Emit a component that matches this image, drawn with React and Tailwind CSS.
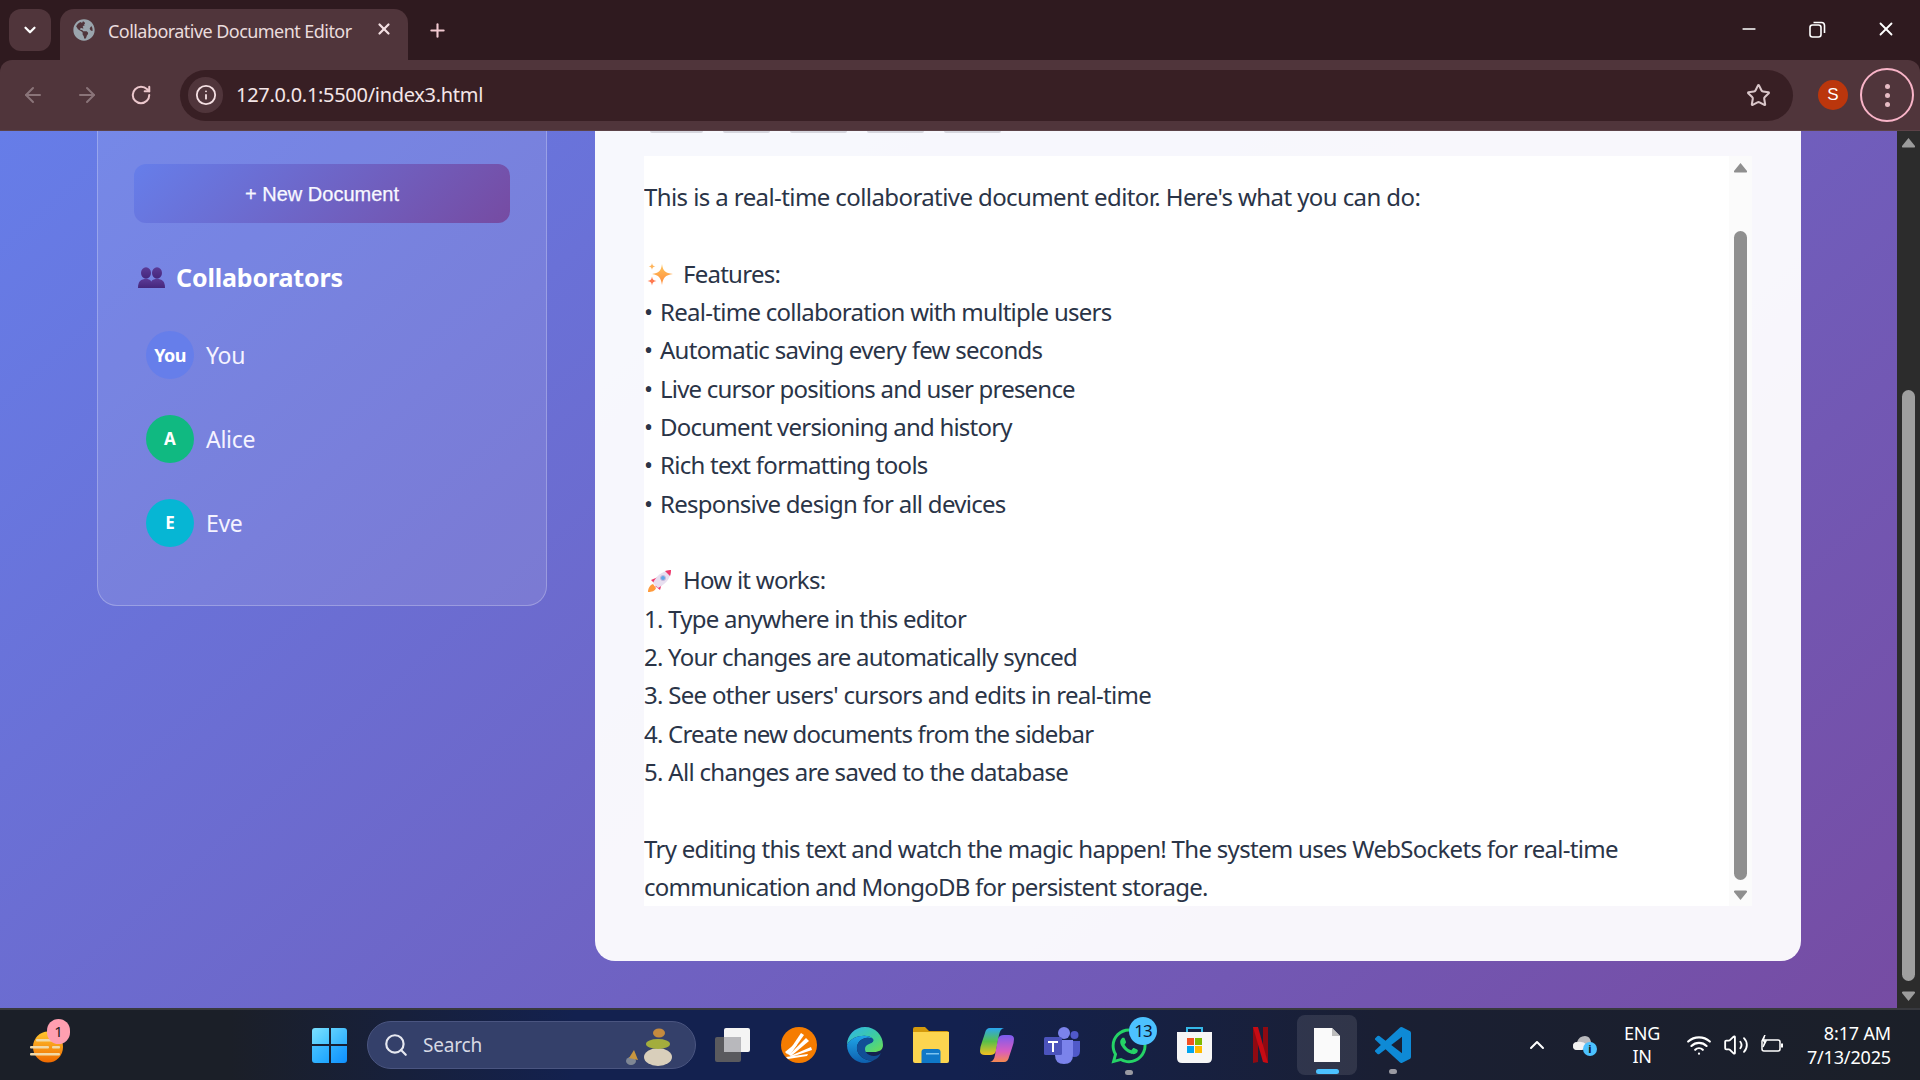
import React from "react";
import { ArrowLeft, ArrowRight, RotateCw, Info, Star, X, Plus, ChevronDown, ChevronUp, Minus, Search, Wifi, Volume2 } from "lucide-react";
import { FaGlobeAmericas, FaWhatsapp } from "react-icons/fa";

const LINES_A = [
  { t: "Real-time collaboration with multiple users", c: "tracking-[-0.72px]" },
  { t: "Automatic saving every few seconds", c: "tracking-[-0.72px]" },
  { t: "Live cursor positions and user presence", c: "tracking-[-0.8px]" },
  { t: "Document versioning and history", c: "tracking-[-0.78px]" },
  { t: "Rich text formatting tools", c: "tracking-[-0.72px]" },
  { t: "Responsive design for all devices", c: "tracking-[-0.72px]" },
];
const LINES_B = [
  { t: "1. Type anywhere in this editor", c: "tracking-[-0.75px]" },
  { t: "2. Your changes are automatically synced", c: "tracking-[-0.78px]" },
  { t: "3. See other users' cursors and edits in real-time", c: "tracking-[-0.7px]" },
  { t: "4. Create new documents from the sidebar", c: "tracking-[-0.78px]" },
  { t: "5. All changes are saved to the database", c: "tracking-[-0.69px]" },
];

function Sparkles() {
  return (
    <svg width="26" height="24" viewBox="0 0 26 24" className="shrink-0">
      <defs><linearGradient id="sp" x1="0" y1="0" x2="0" y2="1"><stop offset="0" stopColor="#ffc65c" /><stop offset="1" stopColor="#ff8a3c" /></linearGradient></defs>
      <path d="M15 2 C16 9 18 11 26 12 C18 13 16 16 15 23 C14 16 12 13 5 12 C12 11 14 9 15 2Z" fill="url(#sp)" />
      <path d="M5 1 C5.4 3.4 6 4 8.4 4.4 C6 4.8 5.4 5.4 5 7.8 C4.6 5.4 4 4.8 1.6 4.4 C4 4 4.6 3.4 5 1Z" fill="#ffb45a" />
      <path d="M5 14.5 C5.5 17.5 6.5 18.500 9.500 19 C6.500 19.500 5.500 20.500 5 23.500 C4.500 20.500 3.500 19.500 .5 19 C3.500 18.500 4.500 17.500 5 14.500Z" fill="#ff7a50" />
    </svg>
  );
}
function Rocket() {
  return (
    <svg width="26" height="24" viewBox="0 0 26 24" className="shrink-0">
      <path d="M1 23 C1 19 3 16 6 15 L9 19 C8 22 5 23 1 23Z" fill="#ff9a3c" />
      <path d="M4 11 L11 8 L8 15Z" fill="#f0386b" />
      <path d="M13 21 L15 14 L8 17Z" fill="#f0386b" />
      <path d="M6 14 C9 7 15 2 24 1 C24 10 18 15 11 19Z" fill="#e8dff0" />
      <path d="M18 2 C21 1.200 23 1 24 1 C24 2.500 23.800 5 23 7Z" fill="#f0386b" />
      <circle cx="16" cy="9" r="2.500" fill="#5fa8e8" stroke="#c9b8d8" strokeWidth="1" />
    </svg>
  );
}
function People() {
  return (
    <svg width="27" height="22" viewBox="0 0 27 22" className="shrink-0">
      <defs><linearGradient id="pp" x1="0" y1="0" x2="0" y2="1"><stop offset="0" stopColor="#5b3a96" /><stop offset="1" stopColor="#45267c" /></linearGradient></defs>
      <ellipse cx="8" cy="6" rx="5" ry="5.800" fill="url(#pp)" />
      <path d="M0 21 C0 14 3 12 8 12 C13 12 14 14 14 21Z" fill="url(#pp)" />
      <ellipse cx="19" cy="6" rx="5" ry="5.800" fill="url(#pp)" />
      <path d="M12 21 C12 14 14 12 19 12 C24 12 27 14 27 21Z" fill="url(#pp)" />
    </svg>
  );
}
function UpTri({ color = "#8f8f8f", w = 15, h = 11 }) {
  return <svg width={w} height={h} viewBox="0 0 15 11"><path d="M7.500 1 L14 9 Q14.500 10.500 13 10.500 L2 10.500 Q.5 10.500 1 9Z" fill={color} /></svg>;
}
function DownTri({ color = "#8f8f8f", w = 15, h = 11 }) {
  return <svg width={w} height={h} viewBox="0 0 15 11"><path d="M7.500 10 L14 2 Q14.500 .5 13 .5 L2 .5 Q.5 .5 1 2Z" fill={color} /></svg>;
}

function Tabs() {
  return (
    <div className="h-[60px] bg-[#2f1a1f] flex items-end pl-[9px] shrink-0 text-[#ecd9dc]">
      <div className="w-[42px] h-[42px] mb-[9px] rounded-[12px] bg-[#50353b] flex items-center justify-center">
        <ChevronDown size={18} strokeWidth={3} color="#fff" />
      </div>
      <div className="ml-[9px] w-[348px] h-[51px] rounded-t-[14px] bg-[#50353b] flex items-start pt-[10px] pl-[13px]">
        <FaGlobeAmericas size={22} color="#9aa5ad" />
        <span className="ml-[13px] mt-[1px] text-[18px] leading-[22px] text-[#eadcdd] font-['Noto_Sans',sans-serif] tracking-[-0.55px] w-[269px] whitespace-nowrap">Collaborative Document Editor</span>
        <X size={18} strokeWidth={3} color="#f2dfe2" className="mt-[1px] -ml-[2px]" />
      </div>
      <div className="ml-[19px] mb-[19px]"><Plus size={21} strokeWidth={2.4} color="#f1c9d0" /></div>
      <div className="ml-auto flex items-center mb-[20px] pr-[23px]">
        <Minus size={20} strokeWidth={2} color="#fff" />
        <svg width="17" height="17" viewBox="0 0 17 17" fill="none" stroke="#fff" strokeWidth="1.600" className="ml-[50px]"><rect x="1" y="4" width="11" height="12" rx="2.500" /><path d="M4.500 1.500 H12.500 Q15.500 1.500 15.500 4.500 V12" /></svg>
        <X size={22} strokeWidth={2} color="#fff" className="ml-[49px]" />
      </div>
    </div>
  );
}

function Toolbar() {
  return (
    <div className="h-[71px] bg-[#50353b] rounded-t-[12px] flex items-center shrink-0 border-b border-[#5c4248]">
      <ArrowLeft size={24} strokeWidth={2} color="#8a7479" className="ml-[21px]" />
      <ArrowRight size={24} strokeWidth={2} color="#8a7479" className="ml-[30px]" />
      <RotateCw size={22} strokeWidth={2.2} color="#ecc7cc" className="ml-[31px]" />
      <div className="ml-[28px] w-[1613px] h-[51px] rounded-full bg-[#381f24] flex items-center pl-[8px]">
        <div className="w-[35px] h-[36px] rounded-full bg-[#50353b] flex items-center justify-center">
          <Info size={22} strokeWidth={2} color="#f4dfe2" />
        </div>
        <span className="ml-[13px] text-[20px] text-[#f4e6e8] font-['Noto_Sans',sans-serif] tracking-[-0.3px] whitespace-nowrap">127.0.0.1:5500/index3.html</span>
        <Star size={25} strokeWidth={2} color="#d9c6c9" className="ml-auto mr-[22px]" />
      </div>
      <div className="ml-[25px] w-[30px] h-[30px] rounded-full bg-[#bb360c] text-white flex items-center justify-center text-[17px] font-['Liberation_Sans',sans-serif]">S</div>
      <div className="ml-[12px] w-[54px] h-[54px] rounded-full border-[2px] border-[#f9b4c8] flex flex-col items-center justify-center gap-[4px]">
        <div className="w-[5px] h-[5px] rounded-full bg-[#e6bcc4]" />
        <div className="w-[5px] h-[5px] rounded-full bg-[#e6bcc4]" />
        <div className="w-[5px] h-[5px] rounded-full bg-[#e6bcc4]" />
      </div>
    </div>
  );
}

function Person({ initial, name, bg, small }) {
  return (
    <div className="flex items-center h-[48px]">
      <div className={`w-[48px] h-[48px] rounded-full flex items-center justify-center text-white font-bold font-['Noto_Sans',sans-serif] ${bg} ${small ? "text-[18px] tracking-[-0.6px]" : "text-[17px]"}`}>{initial}</div>
      <span className="ml-[12px] text-[23px] text-[#f5f3ff] font-['Noto_Sans',sans-serif] tracking-[-0.3px]">{name}</span>
    </div>
  );
}

function Sidebar() {
  return (
    <aside className="ml-[97px] w-[450px] h-[475px] shrink-0 bg-white/10 border-x border-b border-white/25 rounded-b-[20px] pt-[33px] px-[36px]">
      <button className="w-[376px] h-[59px] rounded-[12px] bg-[linear-gradient(135deg,#667eea,#764ba2)] text-[#f8f8ff] text-[20px] font-['Liberation_Sans',Arial,sans-serif] [-webkit-text-stroke:0.25px_#f8f8ff]">+ New Document</button>
      <div className="flex items-center mt-[41px] ml-[4px] h-[28px]">
        <People />
        <span className="ml-[11px] text-[25px] font-bold text-white font-['Noto_Sans',sans-serif] tracking-[-0.15px]">Collaborators</span>
      </div>
      <div className="flex flex-col gap-[36px] mt-[39px] ml-[12px]">
        <Person initial="You" name="You" bg="bg-[#667eea]" small />
        <Person initial="A" name="Alice" bg="bg-[#10b981]" />
        <Person initial="E" name="Eve" bg="bg-[#06b6d4]" />
      </div>
    </aside>
  );
}

function Editor() {
  const line = "h-[38.35px] leading-[38.35px] whitespace-nowrap";
  return (
    <div className="ml-[49px] w-[1108px] h-[750px] bg-white flex overflow-hidden">
      <div className="flex-1 pt-[22px] text-[24px] text-[#2a3447] font-['Noto_Sans',sans-serif] tracking-[-0.75px]">
        <div className={`${line} tracking-[-0.59px]`}>This is a real-time collaborative document editor. Here's what you can do:</div>
        <div className={line} />
        <div className={`${line} flex items-center`}><span className="ml-[3px] mr-[10px]"><Sparkles /></span>Features:</div>
        {LINES_A.map((l) => (
          <div key={l.t} className={`${line} ${l.c}`}><span className="inline-block w-[16px]">•</span>{l.t}</div>
        ))}
        <div className={line} />
        <div className={`${line} flex items-center`}><span className="ml-[3px] mr-[10px]"><Rocket /></span>How it works:</div>
        {LINES_B.map((l) => <div key={l.t} className={`${line} ${l.c}`}>{l.t}</div>)}
        <div className={line} />
        <div className={`${line} tracking-[-0.69px]`}>Try editing this text and watch the magic happen! The system uses WebSockets for real-time</div>
        <div className={`${line} tracking-[-0.78px]`}>communication and MongoDB for persistent storage.</div>
      </div>
      <div className="w-[23px] bg-[#fbfbfb] flex flex-col items-center pt-[6px] shrink-0">
        <UpTri />
        <div className="w-[13px] h-[649px] mt-[58px] rounded-full bg-[#8f8f8f]" />
        <div className="mt-[10px]"><DownTri /></div>
      </div>
    </div>
  );
}

function Main() {
  return (
    <main className="ml-[48px] w-[1206px] h-[830px] bg-white/95 rounded-b-[20px] shrink-0">
      <div className="flex gap-[20px] pl-[55px] h-[2px]">
        {[53, 47, 57, 57, 57].map((w, i) => <div key={i} style={{ width: w }} className="h-[2px] rounded-b-full bg-[#d6d6de]" />)}
      </div>
      <div className="mt-[23px]"><Editor /></div>
    </main>
  );
}

function PageScrollbar() {
  return (
    <div className="w-[23px] bg-[#2c2c2c] flex flex-col items-center shrink-0 pt-[6px]">
      <UpTri color="#9c9c9c" />
      <div className="w-[13px] h-[591px] mt-[242px] rounded-full bg-[#9f9f9f]" />
      <div className="mt-[10px]"><DownTri color="#9c9c9c" /></div>
    </div>
  );
}

function Weather() {
  return (
    <div className="relative w-[33px] h-[34px] ml-[30px] shrink-0">
      <svg width="33" height="32" viewBox="0 0 33 32" className="mt-[3px]">
        <defs><linearGradient id="wg" x1="0" y1="0" x2="0" y2="1"><stop offset="0" stopColor="#ffc62e" /><stop offset="1" stopColor="#f06a00" /></linearGradient></defs>
        <ellipse cx="18" cy="16" rx="15" ry="15.500" fill="url(#wg)" />
        <g fill="#f1d9a8"><rect x="6" y="8" width="18" height="2.500" rx="1" /><rect x="0" y="15" width="19" height="2.500" rx="1" /><rect x="22" y="15" width="8" height="2.500" rx="1" /><rect x="0" y="22" width="30" height="2.500" rx="1" /></g>
      </svg>
      <div className="absolute -top-[9px] left-[17px] w-[23px] h-[25px] rounded-full bg-[#ff9fb0] text-[#222] text-[15px] flex items-center justify-center font-['Noto_Sans',sans-serif]">1</div>
    </div>
  );
}
function WinLogo() {
  return (
    <div className="ml-[249px] w-[35px] h-[35px] grid grid-cols-2 gap-[2px] shrink-0">
      <div className="bg-[linear-gradient(135deg,#7be0ff,#45c4ff)] rounded-tl-[3px]" />
      <div className="bg-[linear-gradient(135deg,#5fd0ff,#2fb0ff)] rounded-tr-[3px]" />
      <div className="bg-[linear-gradient(135deg,#45c0ff,#1da4ff)] rounded-bl-[3px]" />
      <div className="bg-[linear-gradient(135deg,#2fb0ff,#0f90ff)] rounded-br-[3px]" />
    </div>
  );
}
function SearchBox() {
  return (
    <div className="ml-[20px] w-[329px] h-[48px] rounded-full bg-[#34406a] border border-[#4a5580] flex items-center pl-[15px] shrink-0">
      <Search size={26} strokeWidth={2} color="#e6e8f0" />
      <span className="ml-[14px] text-[19px] text-[#d6d9e4] font-['Noto_Sans',sans-serif] tracking-[-0.2px]">Search</span>
      <svg width="50" height="44" viewBox="0 0 50 44" className="ml-auto mr-[20px]">
        <ellipse cx="6" cy="38" rx="5" ry="4" fill="#7f8794" /><path d="M4 35 L9 27 L13 37 Z" fill="#c9963f" />
        <ellipse cx="33" cy="34" rx="14" ry="9" fill="#d9cfbb" /><ellipse cx="33" cy="21" rx="12" ry="5" fill="#a3ad3d" /><ellipse cx="34" cy="10" rx="6" ry="4.500" fill="#c48a3e" />
      </svg>
    </div>
  );
}
function TaskView() {
  return (
    <svg width="35" height="36" viewBox="0 0 35 36" className="ml-[19px] shrink-0">
      <rect x="9" y="1" width="26" height="24" rx="2" fill="#f4f4f4" />
      <rect x="0" y="10" width="26" height="25" rx="2" fill="#5a5a5e" />
      <rect x="9" y="10" width="17" height="15" fill="#b8b8bc" />
    </svg>
  );
}
function OrangeApp() {
  return (
    <svg width="36" height="36" viewBox="0 0 36 36" className="ml-[31px] shrink-0">
      <circle cx="18" cy="18" r="18" fill="#f57c00" />
      <g fill="#fff">
        <path d="M6 27 L20 6 L23 8 L9 28Z" />
        <path d="M8 28 L25 11 L28 14 L10 29Z" />
        <path d="M9 29 L30 20 L31 23 L10 30Z" />
        <path d="M4 25 L15 16 L16 18 L6 27Z" />
        <path d="M5 30 L27 27 L26 29 L7 32Z" />
      </g>
    </svg>
  );
}
function Edge() {
  return (
    <svg width="36" height="36" viewBox="0 0 36 36" className="ml-[30px] shrink-0">
      <defs>
        <linearGradient id="eg" x1="0" y1="0" x2="1" y2="1"><stop offset="0" stopColor="#2fb3ee" /><stop offset=".6" stopColor="#3fcf9a" /><stop offset="1" stopColor="#70dc50" /></linearGradient>
        <linearGradient id="eb" x1="0" y1="0" x2="0" y2="1"><stop offset="0" stopColor="#1fa6e8" /><stop offset="1" stopColor="#0e5fae" /></linearGradient>
      </defs>
      <path d="M0 18 C0 8 8 0 18 0 C28 0 36 8 36 18 C36 23 32 25 27 25 L15 25 C15 14 28 18 26 12 C22 6 4 8 0 18Z" fill="url(#eg)" />
      <path d="M0 18 C4 8 22 6 26 12 C18 8 9 14 10 22 C11 30 20 35 27 33 C24 35 21 36 18 36 C8 36 0 28 0 18Z" fill="url(#eb)" />
      <path d="M10 22 C9 14 18 8 26 12 C28 16 22 16 19 19 C16 23 20 29 27 29 C30 29 32 28 34 26 C32 30 30 32 27 33 C20 35 11 30 10 22Z" fill="#114e96" />
    </svg>
  );
}
function Folder() {
  return (
    <svg width="36" height="36" viewBox="0 0 36 36" className="ml-[30px] shrink-0">
      <path d="M0 2 Q0 0 2 0 H12 L16 4 H34 Q36 4 36 6 V12 H0Z" fill="#d49a0c" />
      <path d="M0 5 H36 V34 Q36 36 34 36 H2 Q0 36 0 34Z" fill="#fcd54f" />
      <path d="M12 36 V25 Q12 22 15 22 H28 Q31 22 31 25 V36Z" fill="#0f78c8" transform="translate(-3.500 0)" />
      <rect x="13" y="26" width="13" height="1.500" fill="#7cc4f0" />
    </svg>
  );
}
function Copilot() {
  return (
    <svg width="34" height="36" viewBox="0 0 34 36" className="ml-[31px] shrink-0">
      <defs>
        <linearGradient id="c1" x1="0" y1="0" x2="0" y2="1"><stop offset="0" stopColor="#2aa6f0" /><stop offset=".5" stopColor="#58c04a" /><stop offset="1" stopColor="#f4c020" /></linearGradient>
        <linearGradient id="c2" x1="0" y1="0" x2="0" y2="1"><stop offset="0" stopColor="#7a5cf0" /><stop offset=".6" stopColor="#d85cc0" /><stop offset="1" stopColor="#f58a50" /></linearGradient>
      </defs>
      <path d="M10 1 H24 Q20 2 19 8 L16 24 Q15 28 10 28 H5 Q0 28 0 24 Q0 20 2 15 L5 6 Q6 1 10 1Z" fill="url(#c1)" />
      <path d="M24 35 H10 Q14 34 15 28 L18 12 Q19 8 24 8 H29 Q34 8 34 12 Q34 16 32 21 L29 30 Q28 35 24 35Z" fill="url(#c2)" />
    </svg>
  );
}
function Teams() {
  return (
    <svg width="37" height="37" viewBox="0 0 37 37" className="ml-[30px] shrink-0">
      <circle cx="20" cy="6" r="6" fill="#7b83eb" /><circle cx="30.500" cy="8" r="4" fill="#5059c9" />
      <path d="M25 14 H36 V24 Q36 30 30 30 Q27 30 25 28Z" fill="#5059c9" />
      <path d="M11 13 H29 V28 Q29 37 20 37 Q11 37 11 28Z" fill="#7b83eb" />
      <rect x="0" y="10" width="18" height="18" rx="1.500" fill="#4b53bc" />
      <path d="M4 14 H14 V16 H10 V25 H8 V16 H4Z" fill="#fff" />
    </svg>
  );
}
function WhatsApp() {
  return (
    <div className="relative ml-[30px] w-[37px] h-[37px] shrink-0">
      <FaWhatsapp size={40} color="#25d366" className="-ml-[2px] -mt-[1px]" />
      <div className="absolute -top-[10px] left-[18px] w-[28px] h-[28px] rounded-full bg-[#4cc2ff] text-[#0c1530] text-[17px] tracking-[-1px] flex items-center justify-center font-['Noto_Sans',sans-serif]">13</div>
      <div className="absolute top-[43px] left-[14px] w-[8px] h-[5px] rounded-full bg-[#9a9aa2]" />
    </div>
  );
}
function Store() {
  return (
    <svg width="35" height="37" viewBox="0 0 35 37" className="ml-[29px] shrink-0">
      <path d="M10 5 V1 H25 V5" fill="none" stroke="#35b8e8" strokeWidth="2" />
      <path d="M0 5 H35 V31 Q35 36 30 36 H5 Q0 36 0 31Z" fill="#f6f6f6" />
      <rect x="10" y="11" width="7" height="7" fill="#f25022" /><rect x="18" y="11" width="7" height="7" fill="#7fba00" />
      <rect x="10" y="19" width="7" height="7" fill="#00a4ef" /><rect x="18" y="19" width="7" height="7" fill="#ffb900" />
    </svg>
  );
}
function Netflix() {
  return (
    <svg width="15" height="36" viewBox="0 0 15 36" className="ml-[41px] shrink-0">
      <path d="M0 0 H5 V35 L0 36Z" fill="#8f0a12" /><path d="M10 0 H15 V36 L10 35Z" fill="#8f0a12" /><path d="M0 0 H5 L15 36 L10 35Z" fill="#c70b14" />
    </svg>
  );
}
function Notepad() {
  return (
    <div className="ml-[29px] w-[60px] h-[60px] rounded-[8px] bg-white/10 flex flex-col items-center pt-[13px] shrink-0">
      <svg width="26" height="34" viewBox="0 0 26 34"><path d="M0 0 H18 L26 8 V34 H0Z" fill="#fafafa" /><path d="M18 0 L26 8 H18Z" fill="#bdbdbd" /></svg>
      <div className="w-[23px] h-[5px] mt-[7px] rounded-full bg-[#4cc2ff]" />
    </div>
  );
}
function VSCode() {
  return (
    <div className="relative ml-[18px] w-[36px] h-[36px] shrink-0">
      <svg width="36" height="36" viewBox="0 0 24 24"><path fill="#0e8ad6" d="M23.15 2.587L18.21.21a1.494 1.494 0 0 0-1.705.29l-9.46 8.63-4.12-3.128a.999.999 0 0 0-1.276.057L.327 7.261A1 1 0 0 0 .326 8.74L3.899 12 .326 15.26a1 1 0 0 0 .001 1.479L1.65 17.94a.999.999 0 0 0 1.276.057l4.12-3.128 9.46 8.63a1.492 1.492 0 0 0 1.704.29l4.942-2.377A1.5 1.5 0 0 0 24 20.06V3.939a1.5 1.5 0 0 0-.85-1.352zm-5.146 14.861L10.826 12l7.178-5.448v10.896z" /></svg>
      <div className="absolute top-[42px] left-[14px] w-[8px] h-[5px] rounded-full bg-[#9a9aa2]" />
    </div>
  );
}
function Tray() {
  return (
    <>
      <ChevronUp size={24} strokeWidth={2} color="#fff" className="ml-[114px] shrink-0" />
      <div className="relative ml-[24px] w-[24px] h-[20px] shrink-0">
        <svg width="20" height="14" viewBox="0 0 20 14" className="mt-[1px]"><path d="M4 14 Q0 14 0 10 Q0 6 4 6 Q6 0 12 0 Q17 0 18 6 Q20 8 18 14Z" fill="#b9b9bd" /><path d="M0 10 Q0 6 5 6 Q10 5 14 9 L9 14 H4 Q0 14 0 10Z" fill="#f2f2f2" /></svg>
        <div className="absolute left-[10px] top-[7px] w-[14px] h-[14px] rounded-full bg-[#4cc2ff] text-[#10131c] text-[11px] font-bold flex items-center justify-center font-['Noto_Sans',sans-serif]">i</div>
      </div>
      <div className="ml-[23px] w-[44px] text-center text-[18px] leading-[23px] text-white font-['Noto_Sans',sans-serif] tracking-[-0.3px] shrink-0">
        <div>ENG</div><div>IN</div>
      </div>
      <Wifi size={26} strokeWidth={2} color="#fff" className="ml-[22px] shrink-0" />
      <Volume2 size={26} strokeWidth={1.7} color="#fff" className="ml-[11px] shrink-0" />
      <svg width="25" height="20" viewBox="0 0 25 20" fill="none" stroke="#fff" strokeWidth="1.500" className="ml-[10px] shrink-0">
        <path d="M5 5 H19 Q21 5 21 7 V14 Q21 16 19 16 H5 Q3 16 3 14 V7" /><path d="M23 8.500 V12.500" strokeWidth="2" /><path d="M6 0 L3 6 H7 L4 12" fill="#fff" />
      </svg>
      <div className="ml-auto mr-[29px] text-right text-[18px] leading-[24px] text-white font-['Noto_Sans',sans-serif] tracking-[-0.15px] whitespace-nowrap">
        <div className="-mt-[1px]">8:17 AM</div><div>7/13/2025</div>
      </div>
    </>
  );
}
function Taskbar() {
  return (
    <footer className="h-[72px] shrink-0 border-t-[2px] border-[#38393e] bg-[linear-gradient(90deg,#1b1f28_0%,#1b1f28_12%,#13214f_30%,#13214f_50%,#1a1f33_72%,#1b1f28_100%)] flex items-center">
      <Weather /><WinLogo /><SearchBox /><TaskView /><OrangeApp /><Edge /><Folder /><Copilot /><Teams /><WhatsApp /><Store /><Netflix /><Notepad /><VSCode /><Tray />
    </footer>
  );
}

export default function App() {
  return (
    <div className="w-[1920px] h-[1080px] flex flex-col overflow-hidden bg-[#2f1a1f]">
      <Tabs />
      <Toolbar />
      <div className="h-[877px] flex shrink-0">
        <div className="flex-1 flex items-start bg-[linear-gradient(138deg,#667de8,#764ca3)]">
          <Sidebar />
          <Main />
        </div>
        <PageScrollbar />
      </div>
      <Taskbar />
    </div>
  );
}
